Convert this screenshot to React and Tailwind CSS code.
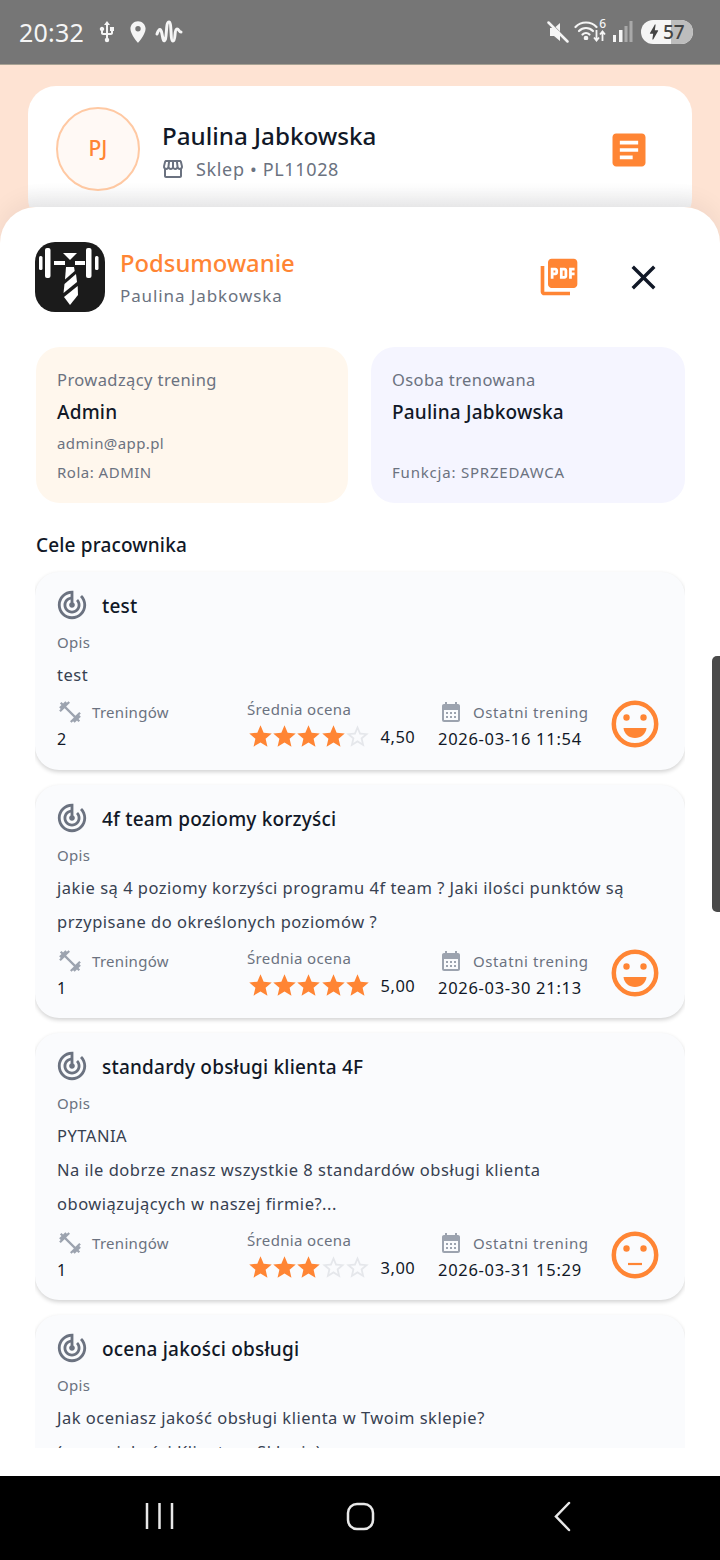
import React from "react";
import {
  MdTrackChanges, MdFitnessCenter, MdCalendarMonth, MdPictureAsPdf, MdOutlineStorefront, MdClose,
  MdStar, MdStarBorder, MdArticle, MdUsb, MdPlace, MdBolt,
} from "react-icons/md";

const font = { fontFamily: '"Noto Sans", sans-serif' };

function Logo() {
  return (
    <svg width="70" height="70" viewBox="0 0 70 70" className="shrink-0">
      <rect width="70" height="70" rx="20" fill="#1b1b1b" />
      <g fill="#fff">
        <rect x="4" y="14" width="3.500" height="14" rx="1.500" />
        <rect x="10" y="6" width="5.500" height="30" rx="2" />
        <rect x="19" y="19" width="11" height="4" />
        <rect x="40" y="19" width="10" height="4" />
        <rect x="51" y="6" width="5.500" height="30" rx="2" />
        <rect x="60" y="14" width="3.500" height="14" rx="1.500" />
        <path d="M28 11h14l-7 7z" />
        <path d="M31 25h8l.7 4-9.700 8.500z" />
        <path d="M29.500 42 41 32l1 8-13.500 11z" />
        <path d="M29 55l13.700-11 .3 9-8 10z" />
      </g>
    </svg>
  );
}

function Stars({ n }) {
  return (
    <div className="ml-[1px] flex h-[24px] items-center">
      {[0, 1, 2, 3, 4].map((i) =>
        i < n ? (
          <MdStar key={i} size={27} className="-mx-[1.350px] shrink-0 text-[#ff8534]" />
        ) : (
          <MdStarBorder key={i} size={27} className="-mx-[1.350px] shrink-0 text-[#e5e7eb]" />
        )
      )}
    </div>
  );
}

function Face({ neutral }) {
  return (
    <svg width="48" height="48" viewBox="0 0 48 48" fill="none" className="-ml-[1px] shrink-0">
      <circle cx="24" cy="24" r="21.200" stroke="#ff8534" strokeWidth="4.500" />
      <circle cx="15.500" cy="17.500" r="3.200" fill="#ff8534" />
      <circle cx="32.500" cy="17.500" r="3.200" fill="#ff8534" />
      {neutral ? (
        <path d="M17 33h14" stroke="#ff8534" strokeWidth="2.200" />
      ) : (
        <path d="M12.500 28h23c-.5 6-5.500 10-11.500 10s-11-4-11.500-10z" fill="#ff8534" />
      )}
    </svg>
  );
}

function Goal({ title, lines, count, stars, avg, date, neutral }) {
  const multi = lines.length > 1;
  return (
    <div className={`rounded-[24px] bg-[#fafbfd] px-[22px] pt-[19px] shadow-[0_2px_4px_rgba(0,0,0,0.18)] ${multi ? "pb-[18px]" : "pb-[19px]"}`}>
      <div className="flex h-[28px] items-center">
        <MdTrackChanges size={34} className="-ml-[2px] shrink-0 text-[#6b7280]" />
        <span className="ml-[13px] mt-[2px] text-[19px] font-medium tracking-[0.2px] text-[#111827]">{title}</span>
      </div>
      <div className="mt-[11px] h-[24px] text-[15px] leading-[24px] tracking-[0.3px] text-[#6b7280]">Opis</div>
      <div className="mt-[4px] text-[16.5px] leading-[34px] tracking-[0.5px] text-[#374151]">
        {lines.map((l) => (
          <div key={l} className="whitespace-nowrap">{l}</div>
        ))}
      </div>
      <div className={`flex ${multi ? "mt-[10px]" : "mt-[8px]"}`}>
        <div className="w-[190px]">
          <div className="flex h-[24px] items-center">
            <MdFitnessCenter size={26} className="shrink-0 text-[#9ca3af]" />
            <span className="ml-[9px] text-[15px] tracking-[0.3px] text-[#6b7280]">Treningów</span>
          </div>
          <div className="mt-[3px] h-[24px] text-[16px] leading-[24px] text-[#111827]">{count}</div>
        </div>
        <div className="-mt-[3px] w-[191px]">
          <div className="h-[24px] text-[15px] leading-[24px] tracking-[0.35px] text-[#6b7280]">Średnia ocena</div>
          <div className="mt-[2px] flex items-center">
            <Stars n={stars} />
            <span className="ml-[11px] mt-[2px] text-[16.5px] tracking-[0.5px] text-[#111827]">{avg}</span>
          </div>
        </div>
        <div className="w-[174px]">
          <div className="flex h-[24px] items-center pl-[1px]">
            <MdCalendarMonth size={24} className="shrink-0 text-[#9ca3af]" />
            <span className="ml-[10px] text-[15px] tracking-[0.6px] text-[#6b7280]">Ostatni trening</span>
          </div>
          <div className="mt-[3px] h-[24px] whitespace-nowrap text-[16.5px] leading-[24px] tracking-[0.7px] text-[#111827]">{date}</div>
        </div>
        <Face neutral={neutral} />
      </div>
    </div>
  );
}

function Info({ bg, label, name, mail, role, width, roleTrack }) {
  return (
    <div className={`${bg} ${width} h-[156px] rounded-[24px] px-[21px] pt-[21px]`}>
      <div className="h-[24px] text-[16.5px] leading-[24px] tracking-[0.4px] text-[#6b7280]">{label}</div>
      <div className="mt-[6px] h-[28px] text-[19px] font-medium leading-[28px] tracking-[0.2px] text-[#111827]">{name}</div>
      <div className="mt-[5px] h-[24px] text-[15px] leading-[24px] tracking-[0.4px] text-[#6b7280]">{mail}</div>
      <div className={`mt-[5px] h-[24px] text-[15px] leading-[24px] ${roleTrack} text-[#6b7280]`}>{role}</div>
    </div>
  );
}

function StatusBar() {
  return (
    <div className="flex h-[65px] shrink-0 items-center border-b border-[#a8a294] bg-[#767676] pl-[19px] pr-[27px] text-[#f5f5f5]">
      <span className="text-[25px] leading-none tracking-[0.2px]">20:32</span>
      <MdUsb size={24} className="ml-[11px]" />
      <MdPlace size={26} className="ml-[6px]" />
      <svg width="28" height="26" viewBox="0 0 28 26" fill="none" className="ml-[4px]">
        <path d="M2 15C4 9 6 9 7 15S9 24 10.500 20C12 13 11 3 14 3C17 3 15 22 18 22C21 22 19 10 22 10C24 10 24 13 26 13" stroke="#f5f5f5" strokeWidth="3" strokeLinecap="round" />
      </svg>
      <div className="flex-1" />
      <svg width="22" height="22" viewBox="0 0 22 22" fill="#f5f5f5">
        <path d="M7 7H3v8h4l6 5V11z" />
        <path d="M13 2 8.500 6 13 10.500z" />
        <path d="M1.500 1.500 20.500 20.500" stroke="#f5f5f5" strokeWidth="2.500" strokeLinecap="round" />
      </svg>
      <div className="relative ml-[5px] h-[26px] w-[32px]">
        <svg width="24" height="20" viewBox="0 0 24 20" fill="none" stroke="#f5f5f5" strokeWidth="2.200" strokeLinecap="round" className="absolute left-0 top-[1px]">
          <path d="M1.500 7C7 1 17 1 22.500 7" />
          <path d="M5 11c4-4 10-4 14 0" />
          <path d="M8.500 14.500c2-2 5-2 7 0" />
          <circle cx="12" cy="18" r="1.200" fill="#f5f5f5" />
        </svg>
        <span className="absolute right-0 -top-[2px] text-[12px] font-medium leading-[14px]">6</span>
        <svg width="13" height="12" viewBox="0 0 13 12" fill="none" stroke="#f5f5f5" strokeWidth="1.800" className="absolute right-0 top-[11px]">
          <path d="M3.500 0v10M1 7.500l2.500 3 2.500-3" />
          <path d="M9.500 11V2M7 4.500l2.500-3 2.500 3" />
        </svg>
      </div>
      <svg width="21" height="24" viewBox="0 0 21 24" className="ml-[6px]">
        <rect x="1" y="15" width="3" height="7" fill="#f5f5f5" />
        <rect x="7" y="10" width="3.500" height="12" fill="#f5f5f5" />
        <rect x="12.500" y="6" width="3" height="16" fill="#a9a9a9" />
        <rect x="17.500" y="1" width="3" height="21" fill="#a9a9a9" />
      </svg>
      <div className="relative ml-[8px] flex h-[24px] w-[52px] items-center overflow-hidden rounded-full bg-[#f5f5f5] text-[#444]">
        <div className="absolute inset-y-0 right-0 w-[22px] bg-[#bdbdbd]" />
        <MdBolt size={20} className="relative ml-[3px] shrink-0" />
        <span className="relative -ml-[1px] text-[19px] font-medium leading-none">57</span>
      </div>
    </div>
  );
}

function NavBar() {
  return (
    <div className="flex h-[84px] shrink-0 items-center bg-black">
      <svg width="720" height="84" viewBox="0 0 720 84" fill="none" stroke="#e8e8e8" strokeWidth="2.500">
        <path d="M147 27v26M159.500 27v26M172 27v26" />
        <rect x="348" y="28" width="25" height="25" rx="9" />
        <path d="M569 27 556 40.500 569 54" strokeLinecap="round" />
      </svg>
    </div>
  );
}

export default function App() {
  return (
    <div className="relative flex h-[1560px] w-[720px] flex-col overflow-hidden bg-[#fee3d3]" style={font}>
      <StatusBar />
      <div className="h-[142px] shrink-0 overflow-hidden px-[28px] pt-[21px]">
        <div className="flex h-[140px] items-start rounded-[28px] bg-gradient-to-b from-white from-[70%] to-[#f1f1f2] to-[86%] pl-[28px] pr-[47px] pt-[21px]">
          <div className="flex h-[84px] w-[84px] shrink-0 items-center justify-center rounded-full border-2 border-[#ffc9a3] bg-[#fff9f5] text-[21px] font-medium text-[#ff8534]">PJ</div>
          <div className="ml-[22px] flex-1">
            <div className="mt-[11px] h-[36px] text-[24.2px] font-medium leading-[36px] text-[#111827]">Paulina Jabkowska</div>
            <div className="flex h-[30px] items-center text-[18px] tracking-[0.65px] text-[#6b7280]">
              <MdOutlineStorefront size={24} className="-ml-[1px]" />
              <span className="ml-[11px]">Sklep • PL11028</span>
            </div>
          </div>
          <MdArticle size={44} className="-mr-[6px] mt-[21px] shrink-0 text-[#ff8534]" />
        </div>
      </div>
      <div className="flex min-h-0 flex-1 flex-col rounded-t-[36px] bg-white px-[35px] pt-[35px] shadow-[0_-6px_24px_rgba(0,0,0,0.06)]">
        <div className="flex h-[70px] shrink-0 items-center">
          <Logo />
          <div className="ml-[15px] -mt-[4px] flex-1">
            <div className="h-[42px] text-[23.8px] font-medium leading-[42px] text-[#ff8534]">Podsumowanie</div>
            <div className="h-[24px] text-[17px] leading-[24px] tracking-[0.9px] text-[#6b7280]">Paulina Jabkowska</div>
          </div>
          <MdPictureAsPdf size={44} className="mr-[42px] shrink-0 text-[#ff8534]" />
          <MdClose size={41} className="mr-[21px] shrink-0 text-[#111827]" />
        </div>
        <div className="min-h-0 flex-1 overflow-hidden pt-[35px]">
          <div className="flex gap-[23px] pl-[1px]">
            <Info bg="bg-[#fff7ed]" width="w-[312px]" label="Prowadzący trening" name="Admin" mail="admin@app.pl" role="Rola: ADMIN" roleTrack="tracking-[0.5px]" />
            <Info bg="bg-[#f5f5ff]" width="w-[314px]" label="Osoba trenowana" name="Paulina Jabkowska" mail="" role="Funkcja: SPRZEDAWCA" roleTrack="tracking-[0.8px]" />
          </div>
          <div className="mt-[30px] h-[24px] pl-[1px] text-[19px] font-medium leading-[24px] tracking-[0.15px] text-[#111827]">Cele pracownika</div>
          <div className="mt-[15px] flex flex-col gap-[15px] pb-[10px]">
            <Goal title="test" lines={["test"]} count="2" stars={4} avg="4,50" date="2026-03-16 11:54" />
            <Goal title="4f team poziomy korzyści" lines={["jakie są 4 poziomy korzyści programu 4f team ? Jaki ilości punktów są", "przypisane do określonych poziomów ?"]} count="1" stars={5} avg="5,00" date="2026-03-30 21:13" />
            <Goal title="standardy obsługi klienta 4F" lines={["PYTANIA", "Na ile dobrze znasz wszystkie 8 standardów obsługi klienta", "obowiązujących w naszej firmie?..."]} count="1" stars={3} avg="3,00" date="2026-03-31 15:29" neutral />
            <Goal title="ocena jakości obsługi" lines={["Jak oceniasz jakość obsługi klienta w Twoim sklepie?", "(ocena jakości Klienta w Sklepie)"]} count="1" stars={3} avg="3,00" date="2026-03-31 15:29" neutral />
          </div>
        </div>
        <div className="h-[28px] shrink-0" />
      </div>
      <NavBar />
      <div className="absolute right-0 top-[656px] h-[256px] w-[8px] rounded-l-[5px] bg-[#4a4a4a]" />
    </div>
  );
}
